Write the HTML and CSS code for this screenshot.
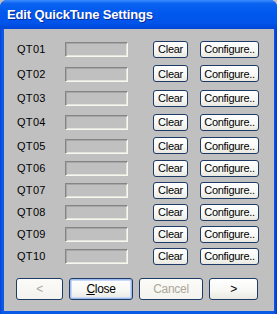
FILE: index.html
```html
<!DOCTYPE html>
<html lang="en">
<head>
    <meta charset="UTF-8">
    <title>Edit QuickTune Settings</title>
    <link rel="stylesheet" href="styles.css">
</head>
<body>
    <div class="window">
        <div class="titlebar">Edit QuickTune Settings</div>
        <div class="client">
            <div class="rows">
                <div class="row"><span class="label">QT01</span><span class="field"></span><button class="btn clear">Clear</button><button class="btn configure">Configure..</button></div>
                <div class="row"><span class="label">QT02</span><span class="field"></span><button class="btn clear">Clear</button><button class="btn configure">Configure..</button></div>
                <div class="row"><span class="label">QT03</span><span class="field"></span><button class="btn clear">Clear</button><button class="btn configure">Configure..</button></div>
                <div class="row"><span class="label">QT04</span><span class="field"></span><button class="btn clear">Clear</button><button class="btn configure">Configure..</button></div>
                <div class="row"><span class="label">QT05</span><span class="field"></span><button class="btn clear">Clear</button><button class="btn configure">Configure..</button></div>
                <div class="row"><span class="label">QT06</span><span class="field"></span><button class="btn clear">Clear</button><button class="btn configure">Configure..</button></div>
                <div class="row"><span class="label">QT07</span><span class="field"></span><button class="btn clear">Clear</button><button class="btn configure">Configure..</button></div>
                <div class="row"><span class="label">QT08</span><span class="field"></span><button class="btn clear">Clear</button><button class="btn configure">Configure..</button></div>
                <div class="row"><span class="label">QT09</span><span class="field"></span><button class="btn clear">Clear</button><button class="btn configure">Configure..</button></div>
                <div class="row"><span class="label">QT10</span><span class="field"></span><button class="btn clear">Clear</button><button class="btn configure">Configure..</button></div>
            </div>
            <div class="actions">
                <button class="btn nav" disabled>&lt;</button>
                <button class="btn wide default"><u>C</u>lose</button>
                <button class="btn wide" disabled>Cancel</button>
                <button class="btn nav next">&gt;</button>
            </div>
        </div>
    </div>
</body>
</html>
```

FILE: styles.css
```css
body {
    margin: 0;
    font-family: "Liberation Sans", Arial, sans-serif;
    font-size: 11px;
    background: #c0c0c0;
}
.window {
    width: 277px;
    height: 314px;
    box-sizing: border-box;
    display: flex;
    flex-direction: column;
    background: linear-gradient(90deg, #0a3fd6 0px, #0a5ae8 2px, #0a5ae8 274px, #0833c9 277px);
    border-radius: 7px 7px 0 0;
    overflow: hidden;
}
.titlebar {
    height: 29px;
    box-sizing: border-box;
    padding: 7px 0 0 7px;
    color: white;
    font-weight: bold;
    font-size: 13px;
    letter-spacing: -0.15px;
    text-shadow: 1px 1px #0a2a9e;
    background: linear-gradient(180deg, #3b8dff 0%, #0b63f0 12%, #0058ee 45%, #0254ea 80%, #0046d6 100%);
}
.client {
    flex: 1;
    margin: 0 3px 3px 4px;
    background: #c0c0c0;
    padding: 8px 0 0 12px;
}
.rows {
    padding-left: 1px;
}
.row {
    display: flex;
    align-items: center;
    height: 22px;
}
.row:nth-child(1),
.row:nth-child(3),
.row:nth-child(4) {
    height: 24px;
}
.row:nth-child(2) {
    height: 25px;
}
.row:nth-child(5) {
    height: 23px;
}
.label {
    width: 48px;
    color: #000;
    letter-spacing: 0.3px;
}
.field {
    width: 63px;
    height: 15px;
    box-sizing: border-box;
    border-top: 1px solid #858585;
    border-left: 1px solid #858585;
    border-bottom: 1px solid #f8f8f0;
    border-right: 1px solid #f8f8f0;
    box-shadow: inset 1px 1px #a6a6a6, inset -1px -1px #e4e4dc;
    margin-top: 1px;
}
.btn {
    font-family: "Liberation Sans", Arial, sans-serif;
    font-size: 11px;
    letter-spacing: -0.3px;
    color: #000;
    background: linear-gradient(180deg, #ffffff 0%, #f7f7f3 60%, #e9e8e1 100%);
    border: 1px solid #1d3b66;
    border-radius: 3px;
    padding: 0;
    height: 17px;
}
.clear {
    width: 35px;
    margin-left: 25px;
}
.configure {
    width: 59px;
    margin-left: 12px;
}
.actions {
    display: flex;
    gap: 6px;
    margin-top: 11px;
}
.actions .btn {
    height: 22px;
    font-size: 12px;
}
.nav {
    width: 47px;
}
.next {
    width: 49px;
}
.wide {
    width: 64px;
}
.btn:disabled {
    color: #aca899;
    background: linear-gradient(180deg, #fbfbf8 0%, #f4f3ee 100%);
}
.default {
    box-shadow: inset 0 0 0 1px #9ebcee, inset 0 0 0 2px #c9d8f4;
}
```
